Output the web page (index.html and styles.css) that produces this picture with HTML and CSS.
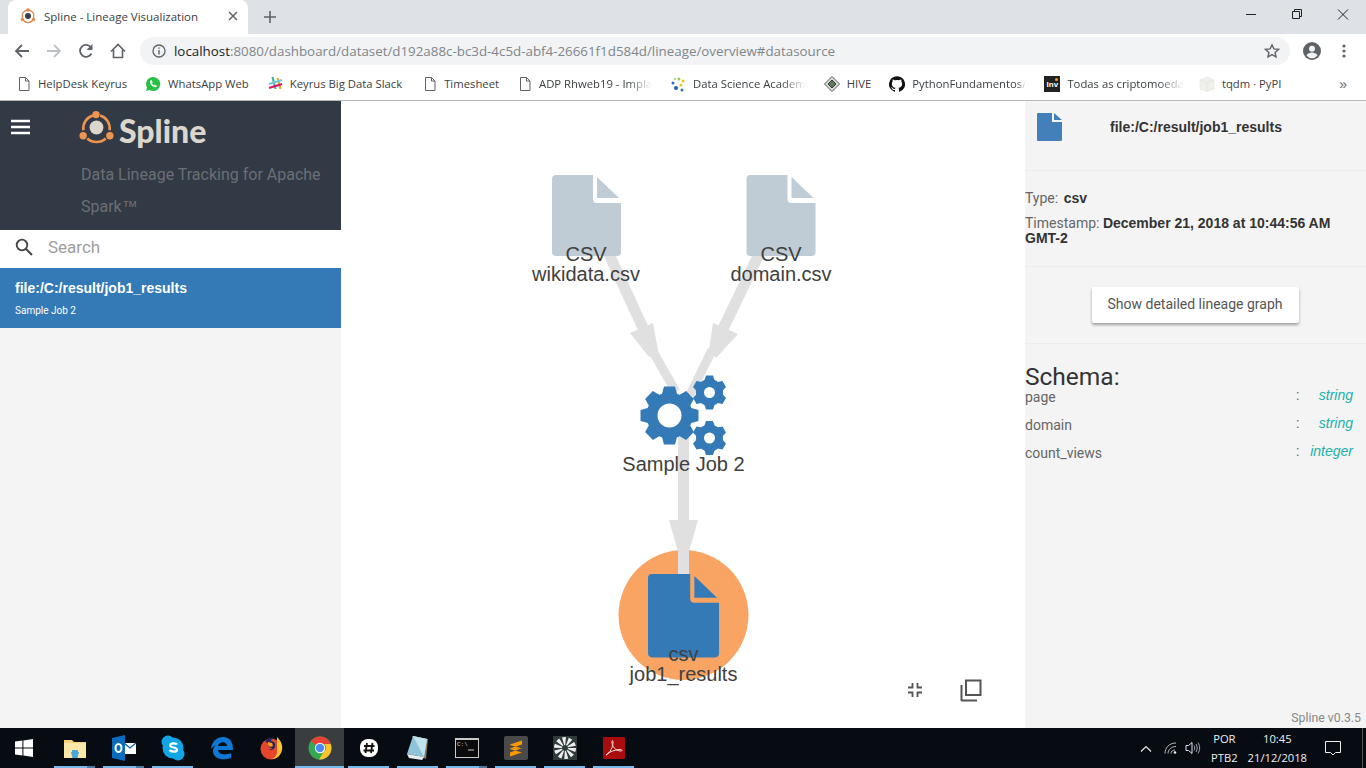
FILE: index.html
```html
<!DOCTYPE html>
<html lang="en">
<head>
    <meta charset="UTF-8">
    <meta name="viewport" content="width=device-width, initial-scale=1.0">
    <title>Spline - Lineage Visualization</title>
    <link rel="stylesheet" href="styles.css">
</head>
<body>
    <!-- Browser window chrome -->
    <header class="tabstrip">
        <div class="tab">
            <svg class="tab-favicon" width="16" height="16" viewBox="0 0 16 16">
                <path d="M8 2a6 6 0 0 0-5.600 8M13.600 10A6 6 0 0 0 8 2M3.500 12.500a6 6 0 0 0 9 0" fill="none" stroke="#e8864a" stroke-width="1.300"/>
                <circle cx="8" cy="8" r="3" fill="#3a3f47"/>
                <circle cx="8" cy="2" r="1.700" fill="#e8864a"/>
                <circle cx="2.500" cy="11.500" r="1.700" fill="#e8864a"/>
                <circle cx="13.500" cy="11.500" r="1.700" fill="#e8864a"/>
            </svg>
            <span class="tab-title">Spline - Lineage Visualization</span>
            <svg class="tab-close" width="10" height="10" viewBox="0 0 10 10"><path d="M1 1l8 8M9 1l-8 8" stroke="#5f6368" stroke-width="1.500"/></svg>
        </div>
        <svg class="tab-new" width="14" height="14" viewBox="0 0 14 14"><path d="M7 1v12M1 7h12" stroke="#5f6368" stroke-width="1.600"/></svg>
        <div class="window-buttons">
            <svg width="46" height="30" viewBox="0 0 46 30"><path d="M18 14.500h10" stroke="#222" stroke-width="1"/></svg>
            <svg width="46" height="30" viewBox="0 0 46 30"><path d="M18.500 11.500h7v7h-7zM20.500 11.500v-2h7v7h-2" fill="none" stroke="#222" stroke-width="1"/></svg>
            <svg width="46" height="30" viewBox="0 0 46 30"><path d="M18 9.500l10 10M28 9.500l-10 10" stroke="#222" stroke-width="1"/></svg>
        </div>
    </header>

    <div class="toolbar">
        <svg class="nav-icon" width="16" height="16" viewBox="0 0 16 16"><path d="M15 8H2M8 2L2 8l6 6" fill="none" stroke="#5f6368" stroke-width="1.800"/></svg>
        <svg class="nav-icon" width="16" height="16" viewBox="0 0 16 16"><path d="M1 8h13M8 2l6 6-6 6" fill="none" stroke="#bdc1c6" stroke-width="1.800"/></svg>
        <svg class="nav-icon" width="16" height="16" viewBox="0 0 16 16"><path d="M13.500 10.500A6 6 0 1 1 13 4.500" fill="none" stroke="#5f6368" stroke-width="1.800"/><path d="M14.500 1v6h-6z" fill="#5f6368"/></svg>
        <svg class="nav-icon" width="16" height="16" viewBox="0 0 16 16"><path d="M1 8.500L8 1.500l7 7M3.500 7v7.500h9V7" fill="none" stroke="#5f6368" stroke-width="1.600"/></svg>
        <div class="omnibox">
            <svg class="omni-info" width="14" height="14" viewBox="0 0 14 14"><circle cx="7" cy="7" r="6" fill="none" stroke="#5f6368" stroke-width="1.300"/><path d="M7 6v4.500M7 3.500v1.300" stroke="#5f6368" stroke-width="1.400"/></svg>
            <span class="url"><span class="url-host">localhost</span>:8080/dashboard/dataset/d192a88c-bc3d-4c5d-abf4-26661f1d584d/lineage/overview#datasource</span>
            <svg class="omni-star" width="16" height="16" viewBox="0 0 16 16"><path d="M8 1.800l1.900 4.100 4.500.5-3.300 3 .9 4.400L8 11.600l-4 2.200.9-4.400-3.300-3 4.500-.5z" fill="none" stroke="#5f6368" stroke-width="1.400"/></svg>
        </div>
        <svg class="profile" width="18" height="18" viewBox="0 0 18 18"><circle cx="9" cy="9" r="9" fill="#5f6368"/><circle cx="9" cy="6.800" r="3" fill="#f1f3f4"/><path d="M3.500 13.500c1-2.300 3.300-3 5.500-3s4.500.7 5.500 3a7 7 0 0 1-11 0z" fill="#f1f3f4"/></svg>
        <svg class="menu-dots" width="4" height="14" viewBox="0 0 4 14"><circle cx="2" cy="2" r="1.600" fill="#5f6368"/><circle cx="2" cy="7" r="1.600" fill="#5f6368"/><circle cx="2" cy="12" r="1.600" fill="#5f6368"/></svg>
    </div>

    <nav class="bookmarks">
        <a class="bookmark">
            <svg width="14" height="16" viewBox="0 0 14 16"><path d="M2.500 1.500h6l3.500 3.500v9.500h-9.500zM8.500 1.500v3.500H12" fill="none" stroke="#5f6368"/></svg>
            <span class="bookmark-name">HelpDesk Keyrus</span>
        </a>
        <a class="bookmark">
            <svg width="16" height="16" viewBox="0 0 16 16"><path d="M8 1a7 7 0 0 0-6 10.500L1 15l3.600-1A7 7 0 1 0 8 1z" fill="#25c245"/><path d="M5.500 4.500c-1 1-.8 2.600.6 4.300s3.200 2.800 4.600 2.400c.7-.2 1.200-.9 1.200-1.500L10.200 8.700l-.8.800c-.8-.2-2-1.300-2.400-2.300l.7-.8L6.800 4.400c-.5-.2-1 0-1.300.1z" fill="#fff"/></svg>
            <span class="bookmark-name">WhatsApp Web</span>
        </a>
        <a class="bookmark">
            <svg width="16" height="16" viewBox="0 0 16 16"><path d="M5.500 1l3 12" stroke="#3eb890" stroke-width="2.200"/><path d="M10.500 2l3 11" stroke="#e9a820" stroke-width="2.200"/><path d="M1 6l13-4" stroke="#70cadb" stroke-width="2.200" transform="translate(1 2)"/><path d="M2 12l13-4" stroke="#e01765" stroke-width="2.200"/></svg>
            <span class="bookmark-name">Keyrus Big Data Slack</span>
        </a>
        <a class="bookmark bookmark-timesheet">
            <svg width="14" height="16" viewBox="0 0 14 16"><path d="M2.500 1.500h6l3.500 3.500v9.500h-9.500zM8.500 1.500v3.500H12" fill="none" stroke="#5f6368"/></svg>
            <span class="bookmark-name">Timesheet</span>
        </a>
        <a class="bookmark bookmark-adp">
            <svg width="14" height="16" viewBox="0 0 14 16"><path d="M2.500 1.500h6l3.500 3.500v9.500h-9.500zM8.500 1.500v3.500H12" fill="none" stroke="#5f6368"/></svg>
            <span class="bookmark-name fade">ADP Rhweb19 - Impla</span>
        </a>
        <a class="bookmark">
            <svg width="16" height="16" viewBox="0 0 16 16"><circle cx="3" cy="7" r="1.500" fill="#2d6fb7"/><circle cx="6" cy="12" r="2" fill="#1d5ea8"/><circle cx="9" cy="3" r="1.500" fill="#9ccc50"/><circle cx="13" cy="5" r="1.500" fill="#f3c623"/><circle cx="11" cy="9" r="1.500" fill="#f3c623"/><circle cx="12" cy="14" r="1.500" fill="#2d6fb7"/><circle cx="5" cy="3" r="1" fill="#9ccc50"/></svg>
            <span class="bookmark-name fade">Data Science Academ</span>
        </a>
        <a class="bookmark">
            <svg width="16" height="16" viewBox="0 0 16 16"><path d="M8 .5L15.500 8 8 15.500.5 8z" fill="#dcdcdc" stroke="#555"/><path d="M8 4l4 4-4 4-4-4z" fill="#5b7a5b" stroke="#333"/></svg>
            <span class="bookmark-name">HIVE</span>
        </a>
        <a class="bookmark">
            <svg width="16" height="16" viewBox="0 0 16 16"><path d="M8 .2a8 8 0 0 0-2.500 15.600c.4.100.5-.2.500-.4v-1.400c-2.200.5-2.700-1-2.700-1-.4-.9-.9-1.200-.9-1.200-.7-.5.100-.5.100-.5.800.1 1.200.8 1.200.8.700 1.200 1.900.9 2.300.7.100-.5.300-.9.500-1.100-1.800-.2-3.600-.9-3.600-4 0-.9.300-1.600.8-2.100-.1-.2-.4-1 .1-2.100 0 0 .7-.2 2.200.8a7.600 7.600 0 0 1 4 0c1.500-1 2.200-.8 2.200-.8.400 1.100.2 1.900.1 2.100.5.600.8 1.300.8 2.100 0 3.100-1.900 3.800-3.700 4 .3.300.6.700.6 1.500v2.200c0 .2.100.5.600.4A8 8 0 0 0 8 .2z" fill="#111"/></svg>
            <span class="bookmark-name fade fade-short">PythonFundamentos/</span>
        </a>
        <a class="bookmark">
            <span class="inv-icon">Inv</span>
            <span class="bookmark-name fade">Todas as criptomoeda</span>
        </a>
        <a class="bookmark bookmark-tqdm">
            <svg width="16" height="16" viewBox="0 0 16 16"><path d="M1 4l7-3 7 3-7 3zM1 4v9l7 3V7zM15 4v9l-7 3V7z" fill="#efefec" stroke="#e2e2de" stroke-width=".5"/></svg>
            <span class="bookmark-name">tqdm · PyPI</span>
        </a>
        <span class="bookmarks-more">»</span>
    </nav>

    <!-- Spline application -->
    <main class="app">
        <aside class="sidebar">
            <div class="brand">
                <svg class="hamburger" width="19" height="16" viewBox="0 0 19 16"><path d="M0 2h19M0 8h19M0 14h19" stroke="#fff" stroke-width="2.600"/></svg>
                <div class="brand-text">
                    <div class="logo">
                        <svg width="35" height="35" viewBox="0 0 38 38">
                            <g fill="none" stroke="#ee9550" stroke-width="2.800">
                                <path d="M15 6A14.500 14.500 0 0 0 4.800 22"/>
                                <path d="M23 6a14.500 14.500 0 0 1 10.200 16"/>
                                <path d="M9 31a15 15 0 0 0 20 0"/>
                            </g>
                            <circle cx="19" cy="19" r="7.500" fill="#dcd6cc"/>
                            <circle cx="18.500" cy="5" r="4" fill="#ee9550"/>
                            <circle cx="4.500" cy="28" r="4" fill="#ee9550"/>
                            <circle cx="33.500" cy="28" r="4" fill="#ee9550"/>
                        </svg>
                        <span class="logo-name">Spline</span>
                    </div>
                    <p class="tagline">Data Lineage Tracking for Apache Spark<span class="tm">™</span></p>
                </div>
            </div>
            <div class="search">
                <svg width="18" height="18" viewBox="0 0 18 18"><circle cx="7" cy="7" r="5.300" fill="none" stroke="#444" stroke-width="1.800"/><path d="M11 11l6 6" stroke="#444" stroke-width="2"/></svg>
                <span class="search-placeholder">Search</span>
            </div>
            <div class="dataset-item">
                <div class="dataset-path">file:/C:/result/job1_results</div>
                <div class="dataset-job">Sample Job 2</div>
            </div>
        </aside>

        <section class="canvas">
            <svg class="graph" width="684" height="627" viewBox="341 101 684 627">
                <defs>
                    <path id="file-shape" d="M556 175h37v24a4 4 0 0 0 4 4h24v49a4 4 0 0 1-4 4h-61a4 4 0 0 1-4-4v-73a4 4 0 0 1 4-4zM597 177l22 21h-22z"/>
                    <g id="gear-big">
                        <circle r="17.500" fill="none" stroke="#337ab7" stroke-width="11"/>
                        <g fill="#337ab7">
                            <path id="tooth" d="M-5.500-29h11l2.500 9h-16z"/>
                            <use href="#tooth" transform="rotate(45)"/>
                            <use href="#tooth" transform="rotate(90)"/>
                            <use href="#tooth" transform="rotate(135)"/>
                            <use href="#tooth" transform="rotate(180)"/>
                            <use href="#tooth" transform="rotate(225)"/>
                            <use href="#tooth" transform="rotate(270)"/>
                            <use href="#tooth" transform="rotate(315)"/>
                        </g>
                    </g>
                    <g id="gear-small">
                        <circle r="9.500" fill="none" stroke="#337ab7" stroke-width="8"/>
                        <g fill="#337ab7">
                            <path id="cog" d="M-3.500-17h7l2 6h-11z"/>
                            <use href="#cog" transform="rotate(60)"/>
                            <use href="#cog" transform="rotate(120)"/>
                            <use href="#cog" transform="rotate(180)"/>
                            <use href="#cog" transform="rotate(240)"/>
                            <use href="#cog" transform="rotate(300)"/>
                        </g>
                    </g>
                </defs>

                <!-- edges -->
                <g class="edge">
                    <path d="M607 250L644 330" fill="none"/>
                    <path d="M761 250L721 333" fill="none"/>
                    <path class="edge-thin" d="M652 350L676 392" fill="none"/>
                    <path class="edge-thin" d="M712 350L690 395" fill="none"/>
                    <path class="edge-head" d="M630 333L653 323 658 350 649 357z"/>
                    <path class="edge-head" d="M738 334L713 323 709 350 716 358z"/>
                </g>

                <circle cx="683.500" cy="615" r="65" fill="#f9a463"/>

                <g class="edge">
                    <path d="M683.500 430V576" fill="none"/>
                    <path class="edge-head" d="M669 520h29l-10 35h-9z"/>
                </g>

                <!-- nodes -->
                <use href="#file-shape" fill="#bfccd6"/>
                <use href="#file-shape" x="194.500" fill="#bfccd6"/>
                <use href="#file-shape" transform="translate(648 574) scale(1.030) translate(-552 -175)" fill="#337ab7"/>

                <use href="#gear-big" x="669.500" y="415.500"/>
                <use href="#gear-small" x="709.500" y="392.500"/>
                <use href="#gear-small" x="709.500" y="438"/>

                <g class="node-label">
                    <text x="586" y="261">CSV</text>
                    <text x="586" y="281">wikidata.csv</text>
                    <text x="781" y="261">CSV</text>
                    <text x="781" y="281">domain.csv</text>
                    <text x="683.500" y="471">Sample Job 2</text>
                    <text x="683.500" y="661">csv</text>
                    <text x="683.500" y="681">job1_results</text>
                </g>
            </svg>
            <svg class="graph-tool tool-fit" width="16" height="16" viewBox="0 0 16 16"><path d="M1 5.500h4.500V1M15 5.500h-4.500V1M1 10.500h4.500V15M15 10.500h-4.500V15" fill="none" stroke="#555" stroke-width="1.800"/></svg>
            <svg class="graph-tool tool-copy" width="24" height="24" viewBox="0 0 24 24"><path d="M7 2.500h14.500V17H7zM2.500 7v15c0 .3.200.5.500.5h15" fill="none" stroke="#555" stroke-width="2"/></svg>
        </section>

        <aside class="details">
            <div class="details-head">
                <svg width="25" height="28" viewBox="0 0 25 28"><path d="M1 0h14v9h10v18a1 1 0 0 1-1 1H1a1 1 0 0 1-1-1V1a1 1 0 0 1 1-1zM17 0l8 7h-8z" fill="#4380b9"/></svg>
                <div class="details-title">file:/C:/result/job1_results</div>
            </div>
            <div class="details-meta">
                <p class="meta-row meta-type">Type: <b>csv</b></p>
                <p class="meta-row meta-time">Timestamp: <b>December 21, 2018 at 10:44:56 AM GMT-2</b></p>
            </div>
            <div class="details-action">
                <button class="lineage-button">Show detailed lineage graph</button>
            </div>
            <div class="schema">
                <h2 class="schema-title">Schema:</h2>
                <div class="schema-row"><span class="field-name">page</span><span class="field-colon">:</span><span class="field-type">string</span></div>
                <div class="schema-row"><span class="field-name">domain</span><span class="field-colon">:</span><span class="field-type">string</span></div>
                <div class="schema-row"><span class="field-name">count_views</span><span class="field-colon">:</span><span class="field-type">integer</span></div>
            </div>
            <div class="version">Spline v0.3.5</div>
        </aside>
    </main>

    <!-- Windows taskbar -->
    <footer class="taskbar">
        <div class="start">
            <svg width="18" height="18" viewBox="0 0 18 18"><path d="M0 2.600L7.400 1.500V8.500H0zM8.400 1.400L18 0V8.500H8.400zM0 9.500h7.400v7L0 15.400zM8.400 9.500H18V18L8.400 16.600z" fill="#fff"/></svg>
        </div>
        <div class="task running stacked">
            <svg width="24" height="24" viewBox="0 0 24 24"><path d="M1 4h8l2 2h12v16H1z" fill="#f3d27a"/><path d="M1 7h22v15H1z" fill="#fbe8a8"/><path d="M8 16h8l-1.500 6h-5z" fill="#4aa6dc"/><path d="M9 14h6v3H9z" fill="#4aa6dc"/></svg>
        </div>
        <div class="task running stacked">
            <svg width="24" height="26" viewBox="0 0 24 26"><path d="M12 8h12v11H12z" fill="#fff"/><path d="M12 8l6 5 6-5" fill="none" stroke="#0a5ca8" stroke-width="1.300"/><path d="M0 3L13 0v26L0 23z" fill="#0a6cbd"/><ellipse cx="6.500" cy="13" rx="3" ry="4" fill="none" stroke="#fff" stroke-width="2"/></svg>
        </div>
        <div class="task running">
            <svg width="24" height="26" viewBox="0 0 24 26"><circle cx="7" cy="7" r="6.500" fill="#12a5e6"/><circle cx="17" cy="19" r="6.500" fill="#12a5e6"/><circle cx="12" cy="13" r="10.500" fill="#12a5e6"/><path d="M16 9.500c-1-1.500-6.500-2-6.800.8-.3 2.800 7 1.700 6.800 4.500-.2 2.500-6 2.300-7.500.2" fill="none" stroke="#fff" stroke-width="2.200"/></svg>
        </div>
        <div class="task">
            <svg width="24" height="24" viewBox="0 0 24 24"><path d="M1 13C2 5 7 1 13 1c7 0 10 5 10 12v1H8c.5 4 6 6 13 3v5c-8 3-18 1-18-7 0-3 1.500-5 3-6-2 1-4 2.500-5 4zM8 10h9c0-5-8-5-9 0z" fill="#0f78d4"/></svg>
        </div>
        <div class="task">
            <svg width="24" height="24" viewBox="0 0 24 24"><circle cx="12" cy="13" r="10.500" fill="#e8452d"/><path d="M18 1c4 4 6 8 5 13-1 5-5 9-10 9 4-2 6-6 5-10z" fill="#ffc42e"/><path d="M6 5c2-3 6-4 9-3-2 1-3 2-3 3 3 0 5 3 4 6-1 3-5 4-7 2 2 1 4 0 4-1-2 0-4-1-4-3 1-1 1-2 0-2-1 0-2-1-3-2z" fill="#28285e"/><path d="M9 6l4 1 1 3-3 1-2-2z" fill="#ff9a22"/></svg>
        </div>
        <div class="task task-active">
            <svg width="24" height="24" viewBox="0 0 24 24"><circle cx="12" cy="12" r="11.500" fill="#34a853"/><path d="M12 .5a11.500 11.500 0 0 1 10.700 7.500H12a4 4 0 0 0-4 2L3 5a11.500 11.500 0 0 1 9-4.500z" fill="#e64335"/><path d="M22.700 8a11.500 11.500 0 0 1-11.700 15.500L16 15a4 4 0 0 0 0-7z" fill="#fbc42c"/><circle cx="12" cy="12" r="5.200" fill="#fff"/><circle cx="12" cy="12" r="4.200" fill="#4c8bf5"/></svg>
        </div>
        <div class="task running">
            <svg width="20" height="20" viewBox="0 0 20 20"><rect x="1" y="1" width="18" height="18" rx="8" fill="#fff"/><path d="M8 5l-1.500 10M13.500 5L12 15M5 8h10.500M4.500 12.500H15" stroke="#111" stroke-width="1.800"/></svg>
        </div>
        <div class="task running">
            <svg width="24" height="26" viewBox="0 0 24 26"><path d="M6 1l16 3-2 20-6-3z" fill="#8a7a55"/><path d="M7 1l14 3-3 18L1 19z" fill="#8fc4d8"/><path d="M7 1l14 3-3 18" fill="#bfe2ec"/><path d="M1 19l17 3-2 3L3 23z" fill="#e6eef0"/></svg>
        </div>
        <div class="task running stacked">
            <svg width="24" height="20" viewBox="0 0 24 20"><rect width="24" height="20" fill="#c9c9c9"/><rect x="1" y="2" width="22" height="17" fill="#0b0b0b"/><text class="cmd-text" x="2" y="8">C:\</text><path d="M13 12h6" stroke="#ccc"/></svg>
        </div>
        <div class="task running">
            <svg width="24" height="24" viewBox="0 0 24 24"><rect width="24" height="24" rx="2" fill="#4a4a4a"/><path d="M18 4.500v4L6 12.500v-4zM6 9v4l12 3.500v-4zM18 12v4.500L6 20.500v-4z" fill="#ff9800"/></svg>
        </div>
        <div class="task running">
            <svg width="24" height="24" viewBox="0 0 24 24">
                <rect width="24" height="24" fill="#2f3b3b"/>
                <circle cx="12" cy="12" r="7" fill="none" stroke="#eee" stroke-width="8" stroke-dasharray="2.600 1.800"/>
                <circle cx="12" cy="12" r="2" fill="#2f3b3b"/>
            </svg>
        </div>
        <div class="task running">
            <svg width="22" height="22" viewBox="0 0 22 22"><rect width="22" height="22" rx="1" fill="#a80c0c"/><path d="M3 18c4-2 7-8 7-13 0-2-1-2-1 0 0 4 3 9 9 9 2 0 1-2-2-1.500-4 .5-9 2-11 4z" fill="none" stroke="#f3dcdc" stroke-width="1"/></svg>
        </div>

        <div class="tray">
            <svg width="12" height="7" viewBox="0 0 12 7"><path d="M1 6.500l5-5 5 5" fill="none" stroke="#e6e6e6" stroke-width="1.200"/></svg>
            <svg class="tray-wifi" width="14" height="12" viewBox="0 0 14 12"><path d="M1 11.500C1 6 5 1 12 1M4 11.500C4 8 7 4.500 12 4.500M7 11.500c0-2 1.500-3.500 4-3.500" fill="none" stroke="#bbb"/><circle cx="11" cy="10.500" r="1.300" fill="#eee"/></svg>
            <svg class="tray-volume" width="16" height="14" viewBox="0 0 16 14"><path d="M1 4.500h2.500L7 1.500v11L3.500 9.500H1z" fill="none" stroke="#e6e6e6"/><path d="M9 4.500c1 1.500 1 3.500 0 5M11 3c1.600 2.500 1.600 5.500 0 8M13 1.500c2.200 3.500 2.200 7.500 0 11" fill="none" stroke="#aaa"/></svg>
            <div class="tray-lang"><span>POR</span><span>PTB2</span></div>
            <div class="tray-clock"><span>10:45</span><span>21/12/2018</span></div>
            <svg class="tray-notify" width="16" height="15" viewBox="0 0 16 15"><path d="M.5.500h15v11h-5l-2.500 2.500-2.500-2.500h-5z" fill="none" stroke="#eee"/></svg>
            <span class="tray-desktop"></span>
        </div>
    </footer>
</body>
</html>
```

FILE: styles.css
```css
/* General Styles */
* {
    box-sizing: border-box;
}

html, body {
    height: 100%;
}

body {
    margin: 0;
    width: 1366px;
    height: 768px;
    overflow: hidden;
    display: flex;
    flex-direction: column;
    font-family: 'Liberation Sans', Arial, sans-serif;
    background-color: #ffffff;
}

svg {
    display: block;
    flex-shrink: 0;
}

/* Browser tabs */
.tabstrip {
    height: 34px;
    background-color: #dee1e6;
    display: flex;
    align-items: flex-end;
    padding-left: 8px;
}

.tab {
    width: 240px;
    height: 34px;
    padding: 0 0 2px 12px;
    background-color: #ffffff;
    border-radius: 8px 8px 0 0;
    display: flex;
    align-items: center;
}

.tab-title {
    margin-left: 8px;
    font-family: 'Open Sans', sans-serif;
    font-size: 11.5px;
    color: #3c4043;
    white-space: nowrap;
}

.tab-close {
    margin-left: 30px;
}

.tab-new {
    margin: 0 0 10px 15px;
}

.window-buttons {
    margin-left: auto;
    align-self: flex-start;
    display: flex;
}

/* Browser toolbar */
.toolbar {
    height: 34px;
    background-color: #ffffff;
    display: flex;
    align-items: center;
    padding-left: 14px;
}

.nav-icon {
    margin-right: 16px;
}

.omnibox {
    width: 1150px;
    height: 28px;
    margin-left: -2px;
    padding: 0 10px 0 12px;
    background-color: #f1f3f4;
    border-radius: 14px;
    display: flex;
    align-items: center;
}

.url {
    margin-left: 8px;
    font-family: 'Open Sans', sans-serif;
    font-size: 13.35px;
    color: #80868b;
    white-space: nowrap;
}

.url-host {
    color: #202124;
}

.omni-star {
    margin-left: auto;
}

.profile {
    margin-left: 13px;
}

.menu-dots {
    margin-left: 21px;
}

/* Bookmarks bar */
.bookmarks {
    height: 33px;
    background-color: #ffffff;
    border-bottom: 1px solid #b8b8b8;
    display: flex;
    align-items: center;
    padding: 0 0 1px 17px;
    gap: 18px;
}

.bookmark {
    display: flex;
    align-items: center;
    gap: 7px;
}

.bookmark-timesheet {
    margin-left: 3px;
}

.bookmark-adp {
    margin-left: 1px;
}

.bookmark-tqdm {
    margin-left: -3px;
}

.bookmark-name {
    font-family: 'Open Sans', sans-serif;
    font-size: 11.3px;
    color: #3c4043;
    white-space: nowrap;
}

.fade {
    -webkit-mask-image: linear-gradient(to right, #000 78%, transparent);
    mask-image: linear-gradient(to right, #000 78%, transparent);
}

.fade-short {
    -webkit-mask-image: linear-gradient(to right, #000 92%, transparent);
    mask-image: linear-gradient(to right, #000 92%, transparent);
}

.inv-icon {
    position: relative;
    width: 16px;
    height: 16px;
    background-color: #222;
    color: #fff;
    font-size: 8px;
    font-weight: bold;
    line-height: 18px;
    text-align: center;
}

.inv-icon::after {
    content: "";
    position: absolute;
    top: 2px;
    right: 2px;
    width: 3px;
    height: 3px;
    border-radius: 50%;
    background-color: #f0a020;
}

.bookmarks-more {
    margin-left: auto;
    margin-right: 19px;
    font-size: 14px;
    color: #5f6368;
}

/* Application */
.app {
    flex: 1;
    display: flex;
    min-height: 0;
}

.sidebar {
    width: 341px;
    background-color: #f4f4f4;
}

.brand {
    height: 129px;
    background-color: #323a45;
    padding: 9px 0 0 11px;
    display: flex;
}

.hamburger {
    margin-top: 9px;
}

.brand-text {
    margin-left: 51px;
    width: 250px;
}

.logo {
    display: flex;
    align-items: flex-start;
    gap: 5px;
    margin-left: -2px;
}

.logo-name {
    margin-top: 2px;
    font-family: 'Lato', sans-serif;
    font-size: 32px;
    font-weight: 900;
    color: #dcd6cc;
    line-height: 38px;
}

.tagline {
    margin: 9px 0 0;
    font-family: 'Roboto', sans-serif;
    font-size: 16px;
    line-height: 32px;
    color: #6b6f75;
}

.tm {
    font-family: 'Liberation Sans', Arial, sans-serif;
}

.search {
    height: 38px;
    background-color: #ffffff;
    display: flex;
    align-items: center;
    padding: 0 0 4px 15px;
}

.search-placeholder {
    margin-left: 15px;
    font-family: 'Roboto', sans-serif;
    font-size: 17px;
    color: #9e9e9e;
}

.dataset-item {
    height: 60px;
    padding: 12px 15px 0;
    background-color: #337ab7;
    color: #ffffff;
}

.dataset-path {
    font-size: 14px;
    font-weight: bold;
    line-height: 16px;
}

.dataset-job {
    margin-top: 9px;
    font-family: 'Roboto', sans-serif;
    font-size: 10px;
    line-height: 12px;
}

/* Lineage graph */
.canvas {
    width: 684px;
    position: relative;
    background-color: #ffffff;
}

.graph {
    position: absolute;
    top: 0;
    left: 0;
}

.edge path {
    stroke: #e0e0e0;
    stroke-width: 11;
}

.edge .edge-thin {
    stroke-width: 9;
}

.edge .edge-head {
    fill: #e0e0e0;
    stroke: none;
}

.node-label text {
    font-family: 'Liberation Sans', Arial, sans-serif;
    font-size: 20px;
    fill: #404040;
    text-anchor: middle;
}

.graph-tool {
    position: absolute;
}

.tool-fit {
    left: 566px;
    top: 581px;
}

.tool-copy {
    left: 618px;
    top: 577px;
}

/* Details panel */
.details {
    width: 341px;
    position: relative;
    background-color: #f4f4f4;
    color: #333333;
}

.details-head {
    height: 70px;
    padding: 12px 0 0 12px;
    border-bottom: 1px solid #ececec;
    display: flex;
}

.details-title {
    margin: 6px 0 0 48px;
    font-size: 14px;
    font-weight: bold;
    line-height: 16px;
}

.details-meta {
    height: 96px;
    padding-top: 19px;
    border-bottom: 1px solid #ececec;
    font-family: 'Roboto', sans-serif;
    font-size: 14px;
    color: #666666;
}

.meta-row {
    margin: 0;
    line-height: 16px;
}

.meta-time {
    margin-top: 10px;
    line-height: 15px;
}

.meta-row b {
    font-family: 'Liberation Sans', Arial, sans-serif;
    color: #333333;
}

.meta-type b {
    margin-left: 2px;
}

.details-action {
    height: 77px;
    padding-top: 20px;
    border-bottom: 1px solid #ececec;
    display: flex;
    justify-content: center;
    align-items: flex-start;
}

.lineage-button {
    width: 207px;
    height: 36px;
    padding: 0 0 2px;
    border: none;
    border-radius: 2px;
    background-color: #ffffff;
    box-shadow: 0 2px 3px rgba(0, 0, 0, 0.35);
    font-family: 'Roboto', sans-serif;
    font-size: 14px;
    color: #555555;
    margin-right: 1px;
}

.schema {
    padding-top: 20px;
}

.schema-title {
    margin: 0;
    font-family: 'Roboto', sans-serif;
    font-size: 24.5px;
    font-weight: 400;
    line-height: 26px;
    color: #333333;
}

.schema-row {
    height: 28px;
    display: flex;
    font-family: 'Roboto', sans-serif;
    font-size: 14px;
    line-height: 14px;
    color: #666666;
    padding-right: 13px;
}

.field-name {
    width: 271px;
}

.field-colon {
    width: 10px;
    margin-top: -2px;
}

.field-type {
    flex: 1;
    margin-top: -2px;
    text-align: right;
    font-family: 'Liberation Sans', Arial, sans-serif;
    font-style: italic;
    color: #20b2aa;
}

.version {
    position: absolute;
    right: 5px;
    bottom: 3px;
    font-family: 'Roboto', sans-serif;
    font-size: 12.3px;
    color: #888888;
}

/* Windows taskbar */
.taskbar {
    height: 40px;
    background-color: #070c13;
    display: flex;
    align-items: stretch;
}

.start {
    width: 50px;
    padding-left: 15px;
    display: flex;
    align-items: center;
}

.task {
    width: 49px;
    position: relative;
    display: flex;
    align-items: center;
    justify-content: center;
}

.running::after {
    content: "";
    position: absolute;
    left: 4px;
    right: 4px;
    bottom: 0;
    height: 2px;
    background-color: #76b9ed;
}

.stacked::before {
    content: "";
    position: absolute;
    right: 4px;
    bottom: 0;
    width: 8px;
    height: 2px;
    background-color: #4f7a9c;
    z-index: 1;
}

.task-active {
    background-color: #3a3d40;
}

.task-active::after {
    content: "";
    position: absolute;
    left: 0;
    right: 0;
    bottom: 0;
    height: 2px;
    background-color: #76b9ed;
}

.cmd-text {
    font-family: 'Liberation Mono', monospace;
    font-size: 6px;
    fill: #cccccc;
}

.tray {
    margin-left: auto;
    display: flex;
    align-items: center;
    color: #eeeeee;
    font-family: 'Open Sans', sans-serif;
    font-size: 11.2px;
}

.tray-wifi {
    margin-left: 12px;
}

.tray-volume {
    margin-left: 7px;
}

.tray-lang, .tray-clock {
    display: flex;
    flex-direction: column;
    align-items: center;
    line-height: 19px;
}

.tray-lang {
    margin-left: 10px;
}

.tray-clock {
    margin-left: 10px;
}

.tray-notify {
    margin-left: 18px;
}

.tray-desktop {
    width: 1px;
    height: 40px;
    margin: 0 3px 0 21px;
    background-color: #555555;
}
```
